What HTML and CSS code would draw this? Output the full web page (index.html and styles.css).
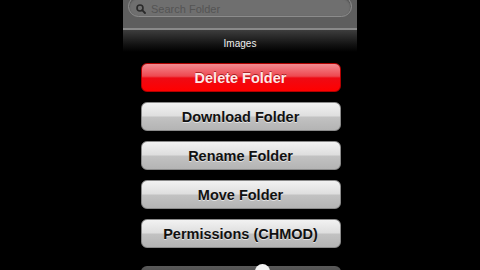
FILE: index.html
```html
<!DOCTYPE html>
<html>
<head>
<meta charset="utf-8">
<link rel="stylesheet" href="styles.css">
</head>
<body>
<div class="phone">
  <div class="searchbar">
    <div class="field">
      <svg class="mag" width="10" height="10" viewBox="0 0 10 10"><circle cx="4" cy="4" r="3" fill="none" stroke="#2a2a2a" stroke-width="1.6"/><line x1="6.2" y1="6.2" x2="9" y2="9" stroke="#2a2a2a" stroke-width="1.8" stroke-linecap="round"/></svg>
      <span class="placeholder">Search Folder</span>
    </div>
  </div>
  <div class="titlebar"><span class="title">Images</span></div>
  <div class="actions">
    <div class="btn red">Delete Folder</div>
    <div class="btn">Download Folder</div>
    <div class="btn">Rename Folder</div>
    <div class="btn">Move Folder</div>
    <div class="btn">Permissions (CHMOD)</div>
  </div>
  <div class="bottom">
    <div class="darkbtn"><span class="knob"></span></div>
  </div>
</div>
</body>
</html>
```
FILE: styles.css
```css
html, body {
  margin: 0;
  padding: 0;
  background: #000;
  width: 480px;
  height: 270px;
  overflow: hidden;
  font-family: "Liberation Sans", Arial, sans-serif;
}
.phone {
  width: 234px;
  margin-left: 123px;
  height: 270px;
  overflow: hidden;
  display: flex;
  flex-direction: column;
}
.phone > * { flex-shrink: 0; }
.searchbar {
  height: 28px;
  background: #5e5e5e;
  border-bottom: 2px solid #8a8a8a;
  padding: 0 5px;
  overflow: hidden;
}
.field {
  margin-top: -4px;
  height: 19px;
  border-radius: 11px;
  background: #6f6f6f;
  border: 1px solid #8c8c8c;
  display: flex;
  align-items: center;
  padding-left: 7px;
  gap: 5px;
  box-shadow: inset 0 1px 2px rgba(0,0,0,0.4);
}
.mag { margin-top: 4px; }
.placeholder {
  color: #545454;
  font-size: 11px;
  margin-top: 4px;
}
.titlebar {
  height: 22px;
  background: linear-gradient(#3d3d3d, #101010 70%, #000);
  display: flex;
  justify-content: center;
  align-items: flex-end;
}
.title {
  color: #f0f0f0;
  font-size: 10px;
  margin-bottom: 3px;
}
.actions {
  margin-top: 11px;
  display: flex;
  flex-direction: column;
  align-items: center;
  gap: 10px;
  margin-left: 1px;
}
.btn {
  width: 200px;
  height: 29px;
  box-sizing: border-box;
  border-radius: 6px;
  background: linear-gradient(#f2f2f2 0%, #dedede 48%, #c2c2c2 52%, #b4b4b4 100%);
  border: 1px solid #8a8a8a;
  display: flex;
  justify-content: center;
  align-items: center;
  font-weight: bold;
  font-size: 14.5px;
  color: #111;
  text-shadow: 0 1px 0 rgba(255,255,255,0.6);
}
.btn.red {
  background: linear-gradient(#f38a90 0%, #ee4850 45%, #ee0a14 52%, #ff0000 100%);
  border-color: #b00000;
  color: #ffe8e8;
  text-shadow: 0 -1px 0 rgba(120,0,0,0.6);
}
.bottom {
  margin-top: 18px;
  display: flex;
  justify-content: center;
  margin-left: 1px;
}
.darkbtn {
  width: 200px;
  height: 20px;
  border-radius: 6px;
  background: linear-gradient(#5a5a5a, #3a3a3a);
  position: relative;
}
.knob {
  position: absolute;
  left: 114px;
  top: -2px;
  width: 15px;
  height: 15px;
  border-radius: 50%;
  background: #f4f4f4;
}
```
